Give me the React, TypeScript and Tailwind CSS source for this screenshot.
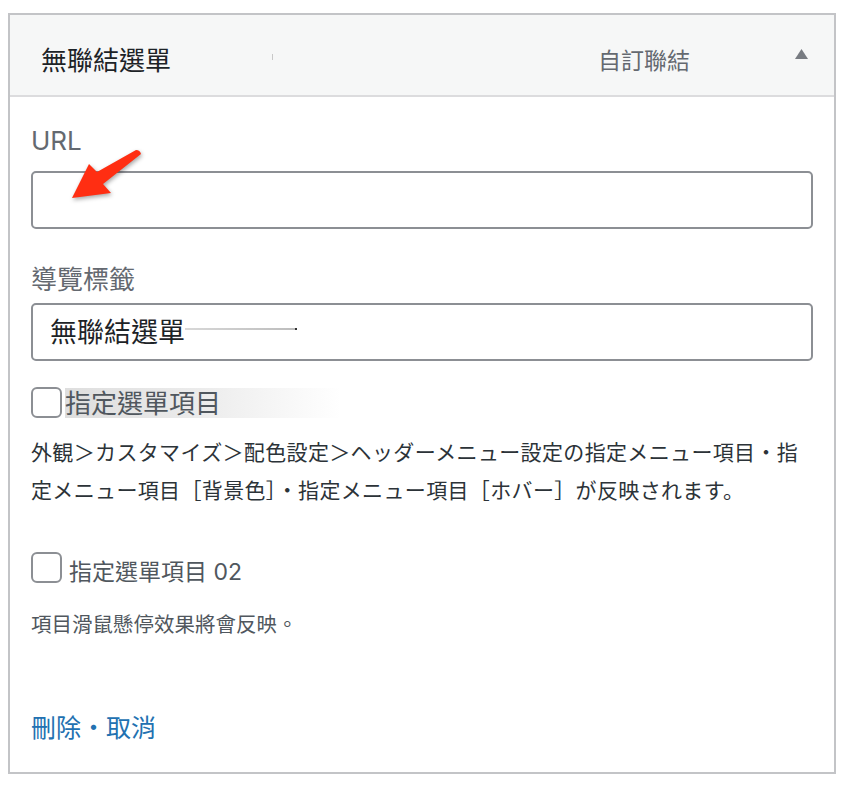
import React from 'react';

// Menu item panel: "custom link" item with URL / nav label fields

const cjk = "font-['Inter','Noto_Sans_CJK_TC',sans-serif]";
const jp = "font-['Noto_Sans_CJK_JP',sans-serif]";

const Checkbox: React.FC = () => (
  <span className="block w-[31px] h-[31px] shrink-0 rounded-[6px] border-2 border-[#8c8f94] bg-white" />
);

const MenuItemPanel: React.FC = () => {
  return (
    <div className="relative min-h-screen bg-white pt-[13px] pl-[8px]">
      <div className="w-[828px] border-2 border-[#c3c4c7] bg-white">
        {/* Header */}
        <div className="flex h-[82px] items-center border-b-2 border-[#dcdcde] bg-[#f6f7f7] pt-[12px] pl-[31px] pr-[26px]">
          <span className={`${cjk} text-[26px] leading-none text-[#1d2327]`}>無聯結選單</span>
          <span className="ml-[101px] mb-[8px] h-[6px] w-px bg-[#c8c8c8]" />
          <span className={`${cjk} ml-auto text-[23px] leading-none text-[#646970]`}>自訂聯結</span>
          <svg className="ml-[105px] mb-[14px]" width="13" height="10" viewBox="0 0 13 10">
            <polygon points="6.5,0 13,10 0,10" fill="#787c82" />
          </svg>
        </div>

        {/* Body */}
        <div className="px-[21px] pt-[26px] pb-[26px]">
          <label className={`${cjk} block text-[26px] leading-[36px] text-[#646970]`}>URL</label>
          <div className="mt-[12px] h-[58px] rounded-[5px] border-2 border-[#8c8f94] bg-white" />

          <label className={`${cjk} mt-[33px] block text-[26px] leading-[36px] text-[#646970]`}>導覽標籤</label>
          <div className="mt-[5px] flex h-[58px] items-center rounded-[5px] border-2 border-[#8c8f94] bg-white pl-[17px]">
            <span className={`${cjk} text-[27px] leading-none text-[#1d2327]`}>無聯結選單</span>
            <span className="mt-[-6px] h-[2px] w-[110px] bg-gradient-to-r from-[#d8d8d8] to-[#bdbdbd]" />
            <span className="mt-[-6px] h-[2px] w-[2px] bg-[#333]" />
          </div>

          <div className="mt-[26px] flex items-center">
            <Checkbox />
            <span
              className={`${cjk} ml-[3px] w-[276px] bg-gradient-to-r from-[#dedede] via-[#ececec] to-white pt-[2px] text-[26px] leading-[28px] text-[#50575e]`}
            >
              指定選單項目
            </span>
          </div>

          <p className={`${jp} mt-[14px] text-[21px] leading-[38px] tracking-[0.35px] text-[#2c3338]`}>
            外観＞カスタマイズ＞配色設定＞ヘッダーメニュー設定の指定メニュー項目・指定メニュー項目［背景色］・指定メニュー項目［ホバー］が反映されます。
          </p>

          <div className="mt-[43px] flex items-center">
            <Checkbox />
            <span className={`${cjk} ml-[7px] pt-[10px] text-[23px] leading-none text-[#50575e]`}>指定選單項目 02</span>
          </div>

          <p className={`${cjk} mt-[26px] text-[20.5px] leading-[30px] text-[#50575e]`}>項目滑鼠懸停效果將會反映。</p>

          <div className={`${cjk} mt-[70px] text-[25px] leading-[36px] text-[#2271b1]`}>
            <a href="#">刪除</a>・<a href="#">取消</a>
          </div>
        </div>
      </div>

      {/* Callout arrow pointing at the URL field */}
      <svg
        className="pointer-events-none absolute left-0 top-0 drop-shadow-[1px_2px_2px_rgba(0,0,0,0.35)]"
        width="160"
        height="220"
        viewBox="0 0 160 220"
      >
        <path
          d="M136,150 Q140,150 141,154 L103,184 L111,193 L72,198 L89,164 L97,172 Z"
          fill="#ff2e12"
        />
      </svg>
    </div>
  );
};

export default function App() {
  return <MenuItemPanel />;
}
